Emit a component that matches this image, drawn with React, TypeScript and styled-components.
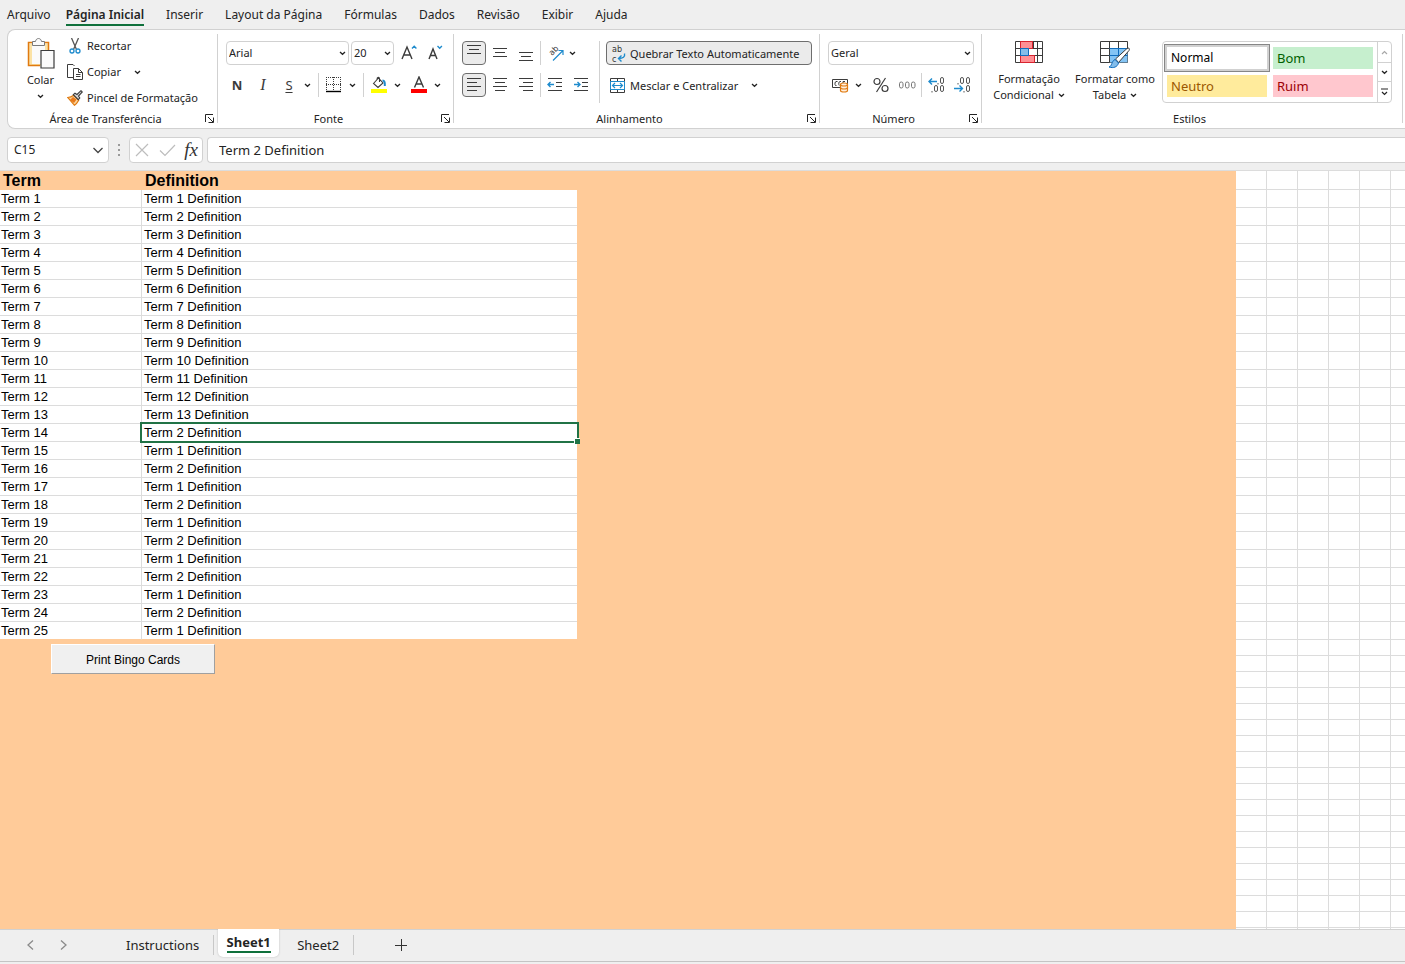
import React from "react";
import styled, { createGlobalStyle, css } from "styled-components";

const GlobalStyle = createGlobalStyle`
  *, *::before, *::after { box-sizing: border-box; }
  body { margin: 0; background: #efefef; }
  button, input, select { font: inherit; color: inherit; }
`;

const uiFont = `"Noto Sans", "Open Sans", sans-serif`;
const iconFont = `"DejaVu Sans", sans-serif`;
const sheetFont = `"Liberation Sans", Arial, sans-serif`;
const line = "#d1d1d1";
const green = "#0f703b";

const Page = styled.div`
  display: flex;
  flex-direction: column;
  min-height: 100vh;
  overflow: hidden;
  background: #efefef;
  color: #242424;
  font-family: ${uiFont};
  font-size: 12px;
  line-height: 16px;
`;

/* ---------- menu ---------- */

const MenuBar = styled.nav`
  display: flex;
  gap: 22px;
  height: 29px;
  padding: 4px 7px 0;
`;

const MenuItem = styled.button<{ $active?: boolean }>`
  height: 22px;
  padding: 2px 0 0;
  border: 0;
  border-bottom: 2px solid ${(p) => (p.$active ? green : "transparent")};
  background: none;
  white-space: nowrap;
  font-weight: ${(p) => (p.$active ? 600 : 400)};

  &:first-child {
    margin-right: -7px;
  }
`;

/* ---------- ribbon ---------- */

const Ribbon = styled.section`
  display: flex;
  margin-left: 7px;
  border: 1px solid ${line};
  border-right: 0;
  border-radius: 8px 0 0 8px;
  background: #fff;
  font-size: 11px;
`;

const Group = styled.div<{ $width?: number }>`
  display: flex;
  flex-direction: column;
  flex: ${(p) => (p.$width ? `0 0 ${p.$width}px` : "1 1 auto")};
`;

const GroupBody = styled.div<{ $pad: string; $row?: boolean }>`
  display: flex;
  flex-direction: ${(p) => (p.$row ? "row" : "column")};
  gap: ${(p) => (p.$row ? 0 : 8)}px;
  height: 81px;
  padding: ${(p) => p.$pad};
`;

const GroupFooter = styled.div`
  display: flex;
  align-items: center;
  height: 17px;
  padding: 0 3px 2px 0;
`;

const GroupLabel = styled.span`
  flex: 1;
  padding-right: 2px;
  text-align: center;
`;

const GroupDivider = styled.span`
  flex: none;
  width: 1px;
  margin: 4px 0 5px;
  background: ${line};
`;

const Row = styled.div<{ $indent?: boolean }>`
  display: flex;
  align-items: center;
  height: 24px;
  padding-left: ${(p) => (p.$indent ? 2 : 0)}px;
`;

const Column = styled.div`
  display: flex;
  flex-direction: column;
  gap: 8px;
`;

const Rule = styled.span<{ $tall?: boolean; $before?: number }>`
  flex: none;
  width: 1px;
  height: ${(p) => (p.$tall ? 62 : 24)}px;
  margin: 0 ${(p) => (p.$tall ? 6 : 2)}px 0 ${(p) => p.$before ?? 6}px;
  background: ${line};
`;

const bare = css`
  display: flex;
  align-items: center;
  justify-content: center;
  flex: none;
  padding: 0;
  border: 0;
  background: none;
`;

const IconButton = styled.button<{ $on?: boolean; $width?: number }>`
  ${bare}
  width: ${(p) => p.$width ?? 26}px;
  height: 24px;
  ${(p) =>
    p.$on &&
    css`
      border: 1px solid #6e6e6e;
      border-radius: 4px;
      background: #ebebeb;
    `}
`;

const CaretButton = styled.button<{ $gap?: number }>`
  ${bare}
  width: 10px;
  height: 16px;
  margin-right: ${(p) => p.$gap ?? 0}px;
`;

const LauncherButton = styled.button`
  ${bare}
  width: 9px;
  height: 9px;
`;

const PasteColumn = styled.div`
  display: flex;
  flex-direction: column;
  align-items: center;
  width: 45px;
  margin-right: 4px;
`;

const PasteButton = styled.button`
  ${bare}
  flex-direction: column;
  gap: 3px;
  padding-top: 5px;
`;

const CommandRow = styled.div`
  display: flex;
  align-items: center;
  gap: 12px;
  height: 26px;
`;

const CommandButton = styled.button`
  ${bare}
  gap: 4px;
  white-space: nowrap;
`;

const WrapButton = styled(CommandButton)`
  height: 24px;
  padding: 1px 11px 0 4px;
  border: 1px solid #6e6e6e;
  border-radius: 4px;
  background: #ebebeb;
`;

const MergeButton = styled(CommandButton)`
  height: 24px;
  margin-right: 11px;
  padding: 1px 0 0 4px;
`;

const SelectBox = styled.label<{ $width: number }>`
  position: relative;
  width: ${(p) => p.$width}px;
  height: 24px;
  margin-right: 2px;

  svg {
    position: absolute;
    top: 10px;
    right: 3px;
    pointer-events: none;
  }
`;

const Select = styled.select`
  width: 100%;
  height: 100%;
  padding: 0 2px;
  border: 1px solid ${line};
  border-radius: 4px;
  background: #fff;
  appearance: none;
`;

const BigButton = styled.button`
  ${bare}
  flex-direction: column;
  align-self: flex-start;
  width: 86px;
`;

const BigIcon = styled.span`
  display: flex;
  height: 30px;
`;

const BigText = styled.span`
  display: flex;
  align-items: center;
  gap: 4px;
  white-space: nowrap;
`;

const Gallery = styled.div`
  display: flex;
  align-self: flex-start;
  height: 62px;
  margin-left: 4px;
  border: 1px solid ${line};
  border-radius: 4px;
`;

const GalleryGrid = styled.div`
  display: grid;
  grid-template-columns: 100px 100px;
  grid-auto-rows: 22px;
  gap: 6px;
  padding: 5px 4px;
`;

const StyleCell = styled.button<{ $bg: string; $fg: string; $selected?: boolean }>`
  padding: 0 4px 1px;
  border: 0;
  background: ${(p) => p.$bg};
  color: ${(p) => p.$fg};
  font-size: 13px;
  text-align: left;
  ${(p) =>
    p.$selected &&
    css`
      box-shadow: 0 0 0 2px #d1d1d1, 0 0 0 3px #868686;
      font-size: 12px;
    `}
`;

const GalleryArrows = styled.div`
  display: grid;
  grid-template-rows: 20px 19px 21px;
  width: 14px;
  border-left: 1px solid ${line};
`;

const ArrowButton = styled.button`
  ${bare}
  & + & {
    border-top: 1px solid ${line};
  }
`;

/* ---------- formula bar ---------- */

const FormulaBar = styled.div`
  display: flex;
  align-items: center;
  height: 41px;
  padding-left: 7px;
  font-size: 13px;
`;

const NameBox = styled.label`
  display: flex;
  align-items: center;
  width: 102px;
  height: 26px;
  padding: 0 4px 0 6px;
  border: 1px solid ${line};
  border-radius: 4px;
  background: #fff;
  font-size: 12px;
`;

const PlainInput = styled.input`
  flex: 1;
  min-width: 0;
  padding: 0;
  border: 0;
  outline: 0;
  background: none;
`;

const Grip = styled.span`
  display: flex;
  justify-content: center;
  width: 20px;
`;

const FormulaActions = styled.div`
  display: flex;
  align-items: center;
  justify-content: space-between;
  width: 74px;
  height: 26px;
  padding: 0 4px;
  border: 1px solid ${line};
  border-radius: 4px;
  background: #fff;
`;

const PlainButton = styled.button`
  ${bare}
`;

const FormulaField = styled.label`
  display: flex;
  align-items: center;
  flex: 1;
  height: 26px;
  margin-left: 4px;
  padding-left: 11px;
  border: 1px solid ${line};
  border-right: 0;
  border-radius: 4px 0 0 4px;
  background: #fff;
`;

/* ---------- worksheet ---------- */

const Sheet = styled.main`
  display: flex;
  flex: 1;
  border-top: 1px solid #dcdcdc;
  background: #fff;
  color: #000;
  font-family: ${sheetFont};
  font-size: 13px;
`;

const FilledArea = styled.div`
  flex: 1;
  background: #ffcb99;
`;

const Table = styled.table`
  table-layout: fixed;
  width: 577px;
  border-collapse: separate;
  border-spacing: 0;

  th {
    height: 19px;
    padding: 0 3px;
    font-size: 16px;
    line-height: 18px;
    text-align: left;
  }
  th:first-child {
    width: 142px;
  }
  td {
    height: 18px;
    padding: 0 1px;
    border-bottom: 1px solid #dcdcdc;
    background: #fff;
    line-height: 17px;
  }
  td:first-child {
    border-right: 1px solid #dcdcdc;
  }
  td + td {
    position: relative;
    padding: 0 2px;
  }
  tr:last-child td {
    border-bottom-color: #ffcb99;
  }
`;

const Selection = styled.span`
  position: absolute;
  z-index: 1;
  inset: -2px;
  border: 2px solid #217346;

  &::after {
    content: "";
    position: absolute;
    right: -3px;
    bottom: -3px;
    width: 6px;
    height: 6px;
    border: solid #fff;
    border-width: 1px 0 0 1px;
    background: #217346;
  }
`;

const PrintButton = styled.button`
  display: block;
  width: 164px;
  height: 30px;
  margin: 4px 0 0 51px;
  padding: 1px 0 0;
  border: 1px solid;
  border-color: #fff #a0a0a0 #a0a0a0 #fff;
  background: #f0f0f0;
  font-size: 12px;
`;

const EmptyCells = styled.div`
  display: flex;
  flex-direction: column;
  flex: 0 0 169px;
`;

const CellBlock = styled.div<{ $row: number; $height?: number }>`
  flex: ${(p) => (p.$height ? `0 0 ${p.$height}px` : "1")};
  background-image: linear-gradient(to right, transparent 30px, #dcdcdc 30px),
    linear-gradient(to bottom, transparent ${(p) => p.$row - 1}px, #dcdcdc ${(p) => p.$row - 1}px);
  background-size: 31px 100%, 100% ${(p) => p.$row}px;
`;

/* ---------- sheet tabs ---------- */

const TabBar = styled.footer`
  display: flex;
  height: 33px;
  margin-bottom: 2px;
  padding-bottom: 2px;
  border-top: 1px solid ${line};
  border-bottom: 1px solid #c4c4c4;
  font-size: 13px;
`;

const TabArrows = styled.div`
  display: flex;
  align-items: center;
  gap: 20px;
  width: 112px;
  padding-left: 25px;
`;

const Tab = styled.button`
  ${bare}
  align-self: center;
  min-width: 69px;
  height: 20px;
  padding: 0 14px;
  border-right: 1px solid #c8c8c8;
`;

const ActiveTab = styled.button`
  ${bare}
  width: 61px;
  height: 28px;
  margin: -1px 4px 0;
  border-radius: 0 0 5px 5px;
  background: #fff;
  box-shadow: 0 0 2px #b8b8b8;
  clip-path: inset(0 -3px -3px);

  span {
    height: 20px;
    border-bottom: 2px solid ${green};
    font-weight: 700;
    line-height: 18px;
  }
`;

const AddTab = styled.button`
  ${bare}
  width: 14px;
  margin-left: 40px;
`;

/* ---------- icons ---------- */

const ink = "#3b3b3b";
const blue = "#1e8bcd";

const Caret = () => (
  <svg width="7" height="5" viewBox="0 0 7 5" fill="none" stroke="#242424" strokeWidth="1.3">
    <path d="M1 1l2.5 2.3L6 1" />
  </svg>
);

const Launcher = () => (
  <svg width="9" height="9" viewBox="0 0 9 9" fill="none" stroke="#242424">
    <path d="M.5 8V.5H8M3 3l5 5M8.5 3.500V8.500H3.500" />
  </svg>
);

const PasteIcon = () => (
  <svg width="28" height="31" viewBox="0 0 28 31">
    <path d="M1.500 5.500h20v22h-20z" fill="#fbe2a5" />
    <path d="M5 7h13v19H5z" fill="#fafafa" />
    <path d="M6 4.500H1.500v23H13M16 4.500h5.500V12" fill="none" stroke="#e07a10" strokeWidth="1.500" />
    <path d="M5.500 7.500v-4h3c.5-4 5.500-4 6 0h3v4z" fill="#fafafa" stroke="#7a7a7a" />
    <path d="M14 12.500h13v17.500H14z" fill="#fafafa" stroke={ink} strokeWidth="1.200" />
  </svg>
);

const CutIcon = () => (
  <svg width="16" height="16" viewBox="0 0 16 16" fill="none" strokeWidth="1.300">
    <path d="M4.500 0l5 11.500M11.500 0l-5 11.500" stroke="#555" />
    <circle cx="5" cy="13" r="2" stroke={blue} />
    <circle cx="11" cy="13" r="2" stroke={blue} />
  </svg>
);

const CopyIcon = () => (
  <svg width="16" height="16" viewBox="0 0 16 16" fill="#fff" stroke={ink}>
    <path d="M6 13.500H.5V.5H6l1.500 1.500" />
    <path d="M6.500 4.500h5l4 4v7h-9zM11.500 4.500v4h4M9 10.500h4.500M9 12.500h4.500" />
  </svg>
);

const BrushIcon = () => (
  <svg width="16" height="16" viewBox="0 0 16 16">
    <path d="M.7 7.500c3 0 4.500-1 6-2.200l5 5C10.500 12.500 9 14.500 7.500 15.300z" fill="#fbd49b" stroke="#e07a10" strokeWidth="1.200" />
    <path d="M3 10l4 3 2.500-3.500L6 7z" fill="#e8791a" />
    <path d="M6.300 4.700l1.700-1.500 2 1.300L14 .7l1.300 1.300-3.800 4 1.300 2-1.500 1.700z" fill="#d8d8d8" stroke={ink} strokeWidth="1.100" />
  </svg>
);

const GrowFont = ({ down }: { down?: boolean }) => (
  <svg width="16" height="18" viewBox="0 0 16 18" fill="none" strokeWidth="1.400">
    <path d={down ? "M2 15L6 5l4 10M3.500 11.500h5" : "M1 15L6 3l5 12M2.700 11h6.600"} stroke={ink} />
    <path d={down ? "M10.500 2l2.200 2.200 2.200-2.200" : "M11 4.500l2.200-2.200 2.200 2.200"} stroke={blue} />
  </svg>
);

const BordersIcon = () => (
  <svg width="16" height="16" viewBox="0 0 16 16" stroke={ink} fill="none">
    <path d="M0 .5h16M0 7.500h16M.5 0v14M7.500 0v14M14.500 0v14" strokeDasharray="1 1" />
    <path d="M0 14.500h15" stroke="#000" strokeWidth="1.400" />
  </svg>
);

const FillIcon = () => (
  <svg width="16" height="18" viewBox="0 0 16 18" fill="none">
    <path d="M2.500 7.500L7.500 2l4.500 5-5 4.500zM6 3.500C6 .5 8.500.5 8.500 3v3" stroke={ink} strokeWidth="1.100" />
    <path d="M11.500 4.500c2 0 2.500 1.500 2.300 5.500" stroke={blue} strokeWidth="2" />
    <path d="M0 13h16v4H0z" fill="#ff0" />
  </svg>
);

const FontColorIcon = () => (
  <svg width="16" height="18" viewBox="0 0 16 18" fill="none">
    <path d="M3.500 11.500L8 1l4.500 10.500M5 8h6" stroke={ink} strokeWidth="1.400" />
    <path d="M0 13h16v4H0z" fill="#f00" />
  </svg>
);

const Lines = ({ rows }: { rows: [number, number, number][] }) => (
  <svg width="16" height="16" viewBox="0 0 16 16" stroke={ink}>
    {rows.map(([y, a, b]) => (
      <path key={y} d={`M${a} ${y}.5H${b}`} />
    ))}
  </svg>
);

const OverflowSvg = styled.svg`
  overflow: visible;
`;

const OrientIcon = () => (
  <OverflowSvg width="17" height="18" viewBox="0 0 17 18" fill="none">
    <text transform="translate(5 12) rotate(-45)" fill="#333" fontSize="8" fontFamily={iconFont}>
      ab
    </text>
    <path d="M6 16.500L16 6.500M11.500 6.500h4.500v4.500" stroke={blue} strokeWidth="1.200" />
  </OverflowSvg>
);

const IndentIcon = ({ right }: { right?: boolean }) => (
  <svg width="16" height="16" viewBox="0 0 16 16" fill="none" stroke={ink}>
    <path d="M1 1.500h14M9 5.500h6M9 9.500h6M1 13.500h14" />
    <path d={right ? "M1 7.500h6M4.500 5l2.500 2.500L4.500 10" : "M1 7.500h6M3.500 5L1 7.500 3.500 10"} stroke={blue} strokeWidth="1.400" />
  </svg>
);

const WrapIcon = () => (
  <OverflowSvg width="15" height="20" viewBox="0 0 15 20" fill="none">
    <g fill="#333" fontSize="8" fontFamily={iconFont}>
      <text x="1" y="8">
        ab
      </text>
      <text x="1" y="18">
        c
      </text>
    </g>
    <path d="M13.500 9.500c.8 3.500-1.500 5-6 5M10.500 11.500L7.500 14.500l3 3" stroke={blue} strokeWidth="1.400" />
  </OverflowSvg>
);

const MergeIcon = () => (
  <svg width="16" height="16" viewBox="0 0 16 16" fill="none">
    <path d="M.5 4V.5h14V4M7.500.5V4M.5 11v3.500h14V11M7.500 11v3.500" stroke={ink} />
    <path d="M.5 3.500h14v8H.5z" fill="#fff" stroke={blue} />
    <path d="M2.500 7.500h10M5 5L2.500 7.500 5 10M10 5l2.500 2.500L10 10" stroke={blue} strokeWidth="1.200" />
  </svg>
);

const CurrencyIcon = () => (
  <svg width="17" height="15" viewBox="0 0 17 15" fill="none">
    <path d="M.5 1.500h15v8H.5z" fill="#fff" stroke={ink} />
    <path d="M5.500 3.500H4c-1 0-1.500 3-.5 4h1M9 3.500H7.800c-1 0-1.500 3-.5 4M11 3.500v2M11 3.500h2" stroke={ink} />
    <path d="M8.500 6.500c0-2 7-2 7 0v6c0 2-7 2-7 0z" fill="#fff0df" stroke="#e07a10" strokeWidth="1.200" />
    <path d="M8.500 6.500c0 2 7 2 7 0M8.500 9.500c0 2 7 2 7 0" stroke="#e07a10" strokeWidth="1.200" />
  </svg>
);

const PercentIcon = () => (
  <svg width="16" height="16" viewBox="0 0 16 16" fill="none" stroke={ink} strokeWidth="1.200">
    <circle cx="4" cy="4.500" r="3" />
    <circle cx="12" cy="11.500" r="3" />
    <path d="M12.500 1l-9 14" />
  </svg>
);

const ThousandsIcon = () => (
  <svg width="17" height="9" viewBox="0 0 17 9" fill="none" stroke="#777">
    {[0, 6, 12].map((x) => (
      <rect key={x} x={x + 0.5} y="1" width="3.500" height="6" rx="1.700" />
    ))}
  </svg>
);

const DecimalIcon = ({ less }: { less?: boolean }) => (
  <svg width="17" height="16" viewBox="0 0 17 16" fill="none" stroke="#555">
    {(less ? [[6, 0], [12, 0], [12, 8]] : [[12, 0], [6, 8], [12, 8]]).map(([x, y]) => (
      <rect key={`${x}-${y}`} x={x + 0.5} y={y + 0.5} width="3" height="6" rx="1.500" />
    ))}
    <path d={less ? "M4 6v1.500M10 14v1.500" : "M10 6v1.500M4 14v1.500"} />
    <path
      d={less ? "M0 11.500h8M5.500 8.500l3 3-3 3" : "M9 4.500H1M4 1.500l-3 3 3 3"}
      stroke={blue}
      strokeWidth="1.400"
    />
  </svg>
);

const ConditionalIcon = () => (
  <svg width="28" height="22" viewBox="0 0 28 22" fill="none">
    <path d="M.5.5h27v21H.5zM.5 7.500h27M.5 14.500h27M5.500.5v21M18.500.5v21M22.500.5v21" fill="#fff" stroke={ink} />
    <path d="M5.500.5h12v7h-12zM5.500 14.500h14v7h-14z" fill="#ff8f94" stroke="#d9232e" />
    <path d="M5.500 7.500h8v7h-8z" fill="#84bdea" stroke="#0f6cbd" />
    <path d="M14 8h8v6h-8z" fill="#fff" />
  </svg>
);

const TableIcon = () => (
  <svg width="31" height="28" viewBox="0 0 31 28" fill="none">
    <path d="M.5.5h27v21H.5z" fill="#fff" stroke={ink} />
    <path d="M9.500 7.500h18v14h-18z" fill="#84c4f4" />
    <path d="M.5 7.500h9M.5 14.500h9M9.500.5v21M18.500.5v7" stroke={ink} />
    <path d="M9.500 7.500h18M9.500 14.500h18M18.500 7.500v14" stroke="#0f6cbd" />
    <path d="M15.500 18L27 7.500c2-1 3 0 2 2L18.500 21.500z" fill="#fff" stroke={ink} />
    <path d="M15 18.500l3.500 3.500c-1 4-5 5.500-9.500 4 3-.5 2.500-6 6-7.500z" fill="#84bdea" stroke="#0f6cbd" />
  </svg>
);

const Chevron = ({ d, color = "#444" }: { d: string; color?: string }) => (
  <svg width="12" height="12" viewBox="0 0 12 12" fill="none" stroke={color} strokeWidth="1.300">
    <path d={d} />
  </svg>
);

/* ---------- content ---------- */

const menu = ["Arquivo", "Página Inicial", "Inserir", "Layout da Página", "Fórmulas", "Dados", "Revisão", "Exibir", "Ajuda"];

const definitionNumber = (n: number) => (n <= 13 ? n : n % 2 === 0 ? 2 : 1);
const terms = Array.from({ length: 25 }, (_, i) => ({
  term: `Term ${i + 1}`,
  definition: `Term ${definitionNumber(i + 1)} Definition`,
}));

const Footer = ({ label, launcher = true }: { label: string; launcher?: boolean }) => (
  <GroupFooter>
    <GroupLabel>{label}</GroupLabel>
    {launcher && (
      <LauncherButton aria-label={`Opções de ${label}`}>
        <Launcher />
      </LauncherButton>
    )}
  </GroupFooter>
);

const Dropdown = ({ label, value, width }: { label: string; value: string; width: number }) => (
  <SelectBox $width={width}>
    <Select aria-label={label} defaultValue={value}>
      <option>{value}</option>
    </Select>
    <Caret />
  </SelectBox>
);

const More = ({ label, gap }: { label: string; gap?: number }) => (
  <CaretButton aria-label={label} $gap={gap}>
    <Caret />
  </CaretButton>
);

const Letter = styled.span<{ $kind: "bold" | "italic" | "underline" }>`
  color: ${ink};
  font-size: 13px;
  ${(p) => p.$kind === "bold" && "font-weight: 700;"}
  ${(p) => p.$kind === "italic" && 'font-family: "Liberation Serif", serif; font-style: italic; font-size: 16px;'}
  ${(p) => p.$kind === "underline" && "text-decoration: underline; text-underline-offset: 2px;"}
`;

const FunctionMark = styled.span`
  color: #333;
  font-family: "Liberation Serif", serif;
  font-size: 19px;
  font-style: italic;
`;

export default function App() {
  return (
    <Page>
      <GlobalStyle />
      <MenuBar>
        {menu.map((m) => (
          <MenuItem key={m} $active={m === "Página Inicial"}>
            {m}
          </MenuItem>
        ))}
      </MenuBar>

      <Ribbon>
        <Group $width={209}>
          <GroupBody $row $pad="3px 0 0 10px">
            <PasteColumn>
              <PasteButton>
                <PasteIcon />
                <span>Colar</span>
              </PasteButton>
              <CaretButton aria-label="Opções de colagem">
                <Caret />
              </CaretButton>
            </PasteColumn>
            <div>
              <CommandRow>
                <CommandButton>
                  <CutIcon />
                  Recortar
                </CommandButton>
              </CommandRow>
              <CommandRow>
                <CommandButton>
                  <CopyIcon />
                  Copiar
                </CommandButton>
                <More label="Opções de cópia" />
              </CommandRow>
              <CommandRow>
                <CommandButton>
                  <BrushIcon />
                  Pincel de Formatação
                </CommandButton>
              </CommandRow>
            </div>
          </GroupBody>
          <Footer label="Área de Transferência" />
        </Group>
        <GroupDivider />

        <Group $width={235}>
          <GroupBody $pad="11px 0 0 6px">
            <Row $indent>
              <Dropdown label="Fonte" value="Arial" width={123} />
              <Dropdown label="Tamanho da fonte" value="20" width={43} />
              <IconButton aria-label="Aumentar fonte">
                <GrowFont />
              </IconButton>
              <IconButton aria-label="Diminuir fonte">
                <GrowFont down />
              </IconButton>
            </Row>
            <Row>
              <IconButton>
                <Letter $kind="bold">N</Letter>
              </IconButton>
              <IconButton>
                <Letter $kind="italic">I</Letter>
              </IconButton>
              <IconButton>
                <Letter $kind="underline">S</Letter>
              </IconButton>
              <More label="Opções de sublinhado" />
              <Rule />
              <IconButton aria-label="Bordas">
                <BordersIcon />
              </IconButton>
              <More label="Opções de bordas" />
              <Rule />
              <IconButton aria-label="Cor de preenchimento">
                <FillIcon />
              </IconButton>
              <More label="Opções de preenchimento" gap={4} />
              <IconButton aria-label="Cor da fonte">
                <FontColorIcon />
              </IconButton>
              <More label="Opções de cor da fonte" />
            </Row>
          </GroupBody>
          <Footer label="Fonte" />
        </Group>
        <GroupDivider />

        <Group $width={365}>
          <GroupBody $row $pad="11px 0 0 8px">
            <Column>
              <Row>
                <IconButton $on $width={24} aria-label="Alinhar em cima">
                  <Lines rows={[[0, 1, 15], [4, 3, 13], [8, 1, 15]]} />
                </IconButton>
                <IconButton $width={28} aria-label="Alinhar no meio">
                  <Lines rows={[[3, 1, 15], [7, 3, 13], [11, 1, 15]]} />
                </IconButton>
                <IconButton $width={24} aria-label="Alinhar embaixo">
                  <Lines rows={[[7, 1, 15], [11, 3, 13], [15, 1, 15]]} />
                </IconButton>
                <Rule $before={2} />
                <IconButton $width={24} aria-label="Orientação">
                  <OrientIcon />
                </IconButton>
                <More label="Opções de orientação" />
              </Row>
              <Row>
                <IconButton $on $width={24} aria-label="Alinhar à esquerda">
                  <Lines rows={[[1, 1, 15], [5, 1, 11], [9, 1, 15], [13, 1, 11]]} />
                </IconButton>
                <IconButton $width={28} aria-label="Centralizar">
                  <Lines rows={[[1, 1, 15], [5, 3, 13], [9, 1, 15], [13, 3, 13]]} />
                </IconButton>
                <IconButton $width={24} aria-label="Alinhar à direita">
                  <Lines rows={[[1, 1, 15], [5, 5, 15], [9, 1, 15], [13, 5, 15]]} />
                </IconButton>
                <Rule $before={2} />
                <IconButton $width={24} aria-label="Diminuir recuo">
                  <IndentIcon />
                </IconButton>
                <IconButton $width={28} aria-label="Aumentar recuo">
                  <IndentIcon right />
                </IconButton>
              </Row>
            </Column>
            <Rule $tall $before={4} />
            <Column>
              <Row>
                <WrapButton>
                  <WrapIcon />
                  Quebrar Texto Automaticamente
                </WrapButton>
              </Row>
              <Row>
                <MergeButton>
                  <MergeIcon />
                  Mesclar e Centralizar
                </MergeButton>
                <More label="Opções de mesclagem" />
              </Row>
            </Column>
          </GroupBody>
          <Footer label="Alinhamento" />
        </Group>
        <GroupDivider />

        <Group $width={161}>
          <GroupBody $pad="11px 0 0 8px">
            <Row>
              <Dropdown label="Formato de número" value="Geral" width={146} />
            </Row>
            <Row>
              <IconButton $width={25} aria-label="Formato de contabilização">
                <CurrencyIcon />
              </IconButton>
              <More label="Opções de contabilização" gap={4} />
              <IconButton $width={28} aria-label="Porcentagem">
                <PercentIcon />
              </IconButton>
              <IconButton $width={24} aria-label="Separador de milhares">
                <ThousandsIcon />
              </IconButton>
              <Rule $before={2} />
              <IconButton $width={24} aria-label="Aumentar casas decimais">
                <DecimalIcon />
              </IconButton>
              <IconButton $width={28} aria-label="Diminuir casas decimais">
                <DecimalIcon less />
              </IconButton>
            </Row>
          </GroupBody>
          <Footer label="Número" />
        </Group>
        <GroupDivider />

        <Group>
          <GroupBody $row $pad="11px 0 0 4px">
            <BigButton>
              <BigIcon>
                <ConditionalIcon />
              </BigIcon>
              <BigText>Formatação</BigText>
              <BigText>
                Condicional <Caret />
              </BigText>
            </BigButton>
            <BigButton>
              <BigIcon>
                <TableIcon />
              </BigIcon>
              <BigText>Formatar como</BigText>
              <BigText>
                Tabela <Caret />
              </BigText>
            </BigButton>
            <Gallery>
              <GalleryGrid>
                <StyleCell $bg="#fff" $fg="#000" $selected>Normal</StyleCell>
                <StyleCell $bg="#c6efce" $fg="#006100">Bom</StyleCell>
                <StyleCell $bg="#ffeb9c" $fg="#9c5700">Neutro</StyleCell>
                <StyleCell $bg="#ffc7ce" $fg="#9c0006">Ruim</StyleCell>
              </GalleryGrid>
              <GalleryArrows>
                <ArrowButton aria-label="Linha anterior">
                  <svg width="7" height="5" viewBox="0 0 7 5" fill="none" stroke="#a8a8a8" strokeWidth="1.200">
                    <path d="M1 4l2.500-2.500L6 4" />
                  </svg>
                </ArrowButton>
                <ArrowButton aria-label="Próxima linha">
                  <Caret />
                </ArrowButton>
                <ArrowButton aria-label="Mais estilos">
                  <svg width="7" height="8" viewBox="0 0 7 8" fill="none" stroke="#242424" strokeWidth="1.200">
                    <path d="M0 1h7M1 4l2.500 2.500L6 4" />
                  </svg>
                </ArrowButton>
              </GalleryArrows>
            </Gallery>
          </GroupBody>
          <Footer label="Estilos" launcher={false} />
        </Group>
        <GroupDivider />
        <Group $width={2} />
      </Ribbon>

      <FormulaBar>
        <NameBox>
          <PlainInput aria-label="Caixa de nome" defaultValue="C15" />
          <Chevron d="M1.500 4L6 8.500 10.500 4" />
        </NameBox>
        <Grip>
          <svg width="3" height="14" viewBox="0 0 3 14" fill="#9a9a9a">
            <path d="M0 1h2v2H0zM0 6h2v2H0zM0 11h2v2H0z" />
          </svg>
        </Grip>
        <FormulaActions>
          <PlainButton aria-label="Cancelar">
            <svg width="16" height="14" viewBox="0 0 16 14" stroke="#bdbdbd" strokeWidth="1.200">
              <path d="M2 1l12 12M14 1L2 13" />
            </svg>
          </PlainButton>
          <PlainButton aria-label="Inserir">
            <svg width="17" height="14" viewBox="0 0 17 14" fill="none" stroke="#bdbdbd" strokeWidth="1.200">
              <path d="M1 7.500l5 5L16 2" />
            </svg>
          </PlainButton>
          <PlainButton>
            <FunctionMark>fx</FunctionMark>
          </PlainButton>
        </FormulaActions>
        <FormulaField>
          <PlainInput aria-label="Barra de fórmulas" defaultValue="Term 2 Definition" />
        </FormulaField>
      </FormulaBar>

      <Sheet>
        <FilledArea>
          <Table>
            <thead>
              <tr>
                <th>Term</th>
                <th>Definition</th>
              </tr>
            </thead>
            <tbody>
              {terms.map((t, i) => (
                <tr key={t.term}>
                  <td>{t.term}</td>
                  <td>
                    {t.definition}
                    {i === 13 && <Selection />}
                  </td>
                </tr>
              ))}
            </tbody>
          </Table>
          <PrintButton>Print Bingo Cards</PrintButton>
        </FilledArea>
        <EmptyCells>
          <CellBlock $row={19} $height={19} />
          <CellBlock $row={18} $height={450} />
          <CellBlock $row={16} />
        </EmptyCells>
      </Sheet>

      <TabBar>
        <TabArrows>
          <PlainButton aria-label="Planilha anterior">
            <Chevron d="M8 1.500L3 6l5 4.500" color="#8a8a8a" />
          </PlainButton>
          <PlainButton aria-label="Próxima planilha">
            <Chevron d="M4 1.500L9 6l-5 4.500" color="#8a8a8a" />
          </PlainButton>
        </TabArrows>
        <Tab>Instructions</Tab>
        <ActiveTab>
          <span>Sheet1</span>
        </ActiveTab>
        <Tab>Sheet2</Tab>
        <AddTab aria-label="Nova planilha">
          <svg width="12" height="12" viewBox="0 0 12 12" stroke="#333">
            <path d="M0 6.500h12M6.500 0v12" />
          </svg>
        </AddTab>
      </TabBar>
    </Page>
  );
}
